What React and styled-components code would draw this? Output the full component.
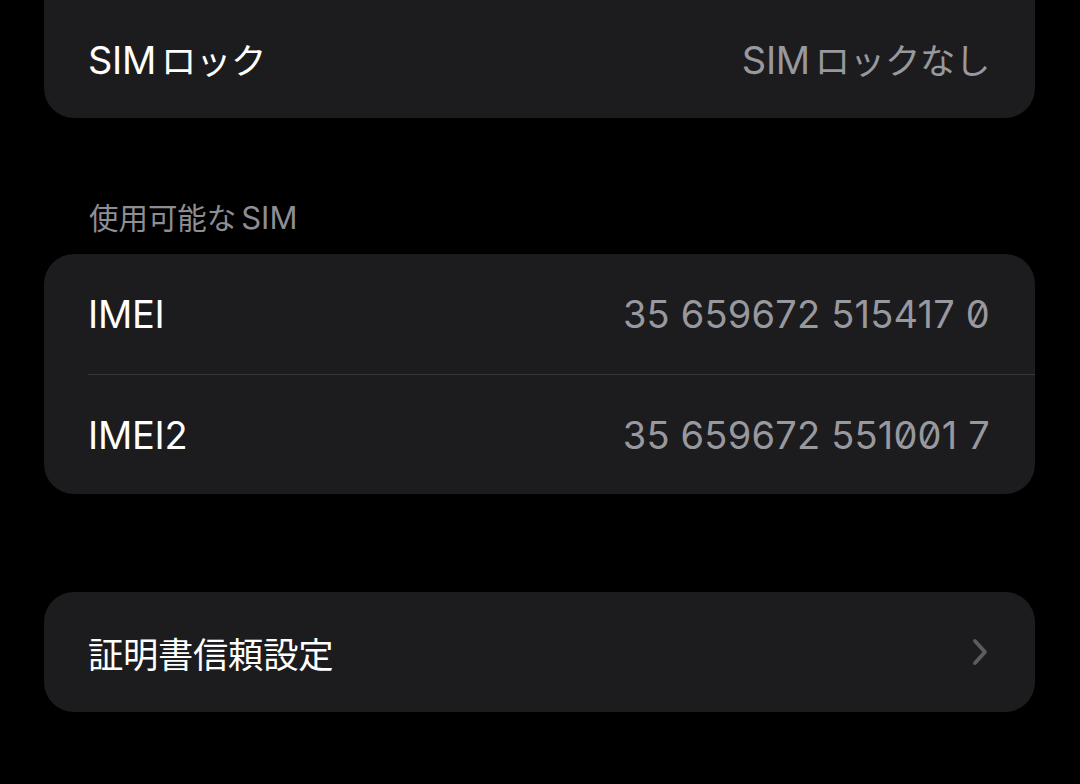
import React from "react";
import styled, { createGlobalStyle } from "styled-components";

const GlobalStyle = createGlobalStyle`
  html, body {
    margin: 0;
    padding: 0;
    background-color: #000000;
  }
  body {
    font-family: Inter, "Noto Sans CJK JP", sans-serif;
    -webkit-font-smoothing: antialiased;
  }
`;

const sections = [
  {
    gap: -2,
    clipped: true,
    rows: [{ label: "SIMロック", value: "SIMロックなし" }],
  },
  {
    gap: 78,
    header: "使用可能なSIM",
    rows: [
      { label: "IMEI", value: "35 659672 515417 0", digits: true },
      { label: "IMEI2", value: "35 659672 551001 7", digits: true },
    ],
  },
  {
    gap: 98,
    rows: [{ label: "証明書信頼設定", chevron: true }],
  },
];

// iOS puts a little air between latin runs and kana/kanji
const Mixed = ({ text, scale = 0.93 }) => {
  const parts = text.split(/([A-Za-z0-9 ]+)/).filter(Boolean);
  return parts.map((part, i) => {
    if (/^[A-Za-z0-9 ]+$/.test(part)) {
      return (
        <Latin key={i} $before={i > 0} $after={i < parts.length - 1}>
          {part}
        </Latin>
      );
    }
    return (
      <Cjk key={i} $scale={scale}>
        {part}
      </Cjk>
    );
  });
};

export default function App() {
  return (
    <Page>
      <GlobalStyle />
      {sections.map((section, i) => (
        <Section key={i} $gap={section.gap}>
          {section.header && (
            <Header>
              <Mixed text={section.header} scale={0.95} />
            </Header>
          )}
          <Card $clipped={section.clipped}>
            {section.rows.map((row, j) => (
              <Row key={row.label} $divider={j > 0}>
                <Label>
                  <Mixed text={row.label} />
                </Label>
                {row.value && (
                  <Value $digits={row.digits}>
                    {row.digits ? row.value : <Mixed text={row.value} />}
                  </Value>
                )}
                {row.chevron && (
                  <Chevron viewBox="0 0 16 28">
                    <path
                      d="M3 3 L13 14 L3 25"
                      fill="none"
                      stroke="#5b5b60"
                      strokeWidth="3.8"
                      strokeLinecap="round"
                      strokeLinejoin="round"
                    />
                  </Chevron>
                )}
              </Row>
            ))}
          </Card>
        </Section>
      ))}
    </Page>
  );
}

const Page = styled.div`
  width: 1080px;
  height: 784px;
  overflow: hidden;
  background-color: #000000;
  display: flex;
  flex-direction: column;
  padding: 0 45px 0 44px;
  box-sizing: border-box;
`;

const Section = styled.div`
  display: flex;
  flex-direction: column;
  margin-top: ${(p) => p.$gap}px;
`;

const Header = styled.div`
  font-size: 31px;
  font-weight: 400;
  color: #8d8d93;
  padding: 0 0 0 45px;
  height: 58px;
  line-height: 44px;
`;

const Card = styled.div`
  background-color: #1c1c1e;
  border-radius: ${(p) => (p.$clipped ? "0 0 30px 30px" : "30px")};
  overflow: hidden;
  display: flex;
  flex-direction: column;
`;

const Row = styled.div`
  height: 120px;
  margin-left: 44px;
  padding-right: 45px;
  display: flex;
  align-items: center;
  justify-content: space-between;
  box-sizing: border-box;
  border-top: ${(p) => (p.$divider ? "1px solid #38383a" : "none")};
`;

const Latin = styled.span`
  padding-left: ${(p) => (p.$before ? "5px" : "0")};
  padding-right: ${(p) => (p.$after ? "5px" : "0")};
`;

const Cjk = styled.span`
  font-size: ${(p) => p.$scale}em;
`;

const Label = styled.div`
  font-size: 38px;
  font-weight: 400;
  color: #ffffff;
  letter-spacing: -0.3px;
`;

const Value = styled.div`
  font-size: 38px;
  font-weight: 400;
  color: #98989f;
  font-feature-settings: ${(p) => (p.$digits ? '"zero" 1' : "normal")};
  letter-spacing: ${(p) => (p.$digits ? "0.2px" : "-0.3px")};
`;

const Chevron = styled.svg`
  width: 16px;
  height: 28px;
  margin-right: 2px;
`;
